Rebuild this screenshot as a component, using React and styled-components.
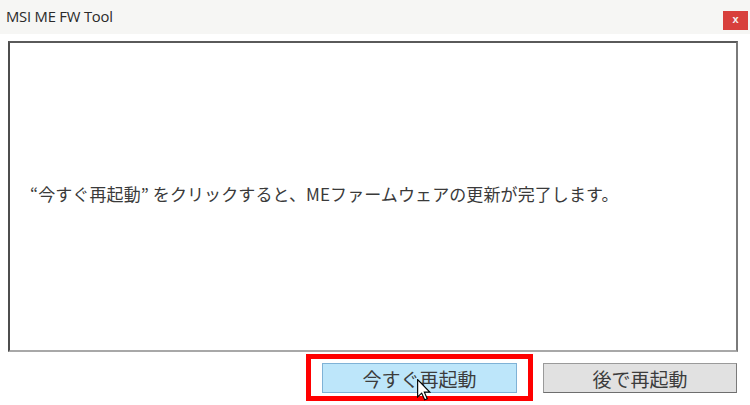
import React from "react";
import styled, { createGlobalStyle } from "styled-components";

const Global = createGlobalStyle`
  html, body { margin: 0; padding: 0; background: #ffffff; }
  body { font-family: "Noto Sans", "Noto Sans CJK JP", sans-serif; }
`;

const Window = styled.div`
  position: relative;
  width: 750px;
  height: 405px;
  background: #ffffff;
  display: flex;
  flex-direction: column;
  overflow: hidden;
`;

const TitleBar = styled.div`
  height: 34px;
  flex: none;
  background: #f6f6f4;
  display: flex;
  align-items: center;
  justify-content: space-between;
  padding: 0 2px 0 6px;
  box-sizing: border-box;
`;

const Title = styled.span`
  font-family: "Open Sans", "Noto Sans", sans-serif;
  font-size: 14.8px;
  color: #2a2a2a;
  letter-spacing: -0.2px;
  margin-top: -3px;
`;

const CloseButton = styled.div`
  width: 25px;
  height: 19px;
  background: #d8403c;
  color: #f4f4f4;
  display: flex;
  align-items: center;
  justify-content: center;
  font-family: "Liberation Sans", sans-serif;
  font-weight: bold;
  font-size: 11px;
  line-height: 1;
  margin-top: 6px;
  padding-bottom: 2px;
  box-sizing: border-box;
`;

const Panel = styled.div`
  margin: 7px 12px 0 8px;
  height: 311px;
  box-sizing: border-box;
  border-style: solid;
  border-width: 2px;
  border-color: #5a5a5a #7a7a7a #a8a8a8 #4e4e4e;
  display: flex;
  align-items: center;
  padding: 0 0 6px 20px;
`;

const Message = styled.p`
  margin: 0;
  font-family: "Noto Sans CJK JP", "Noto Sans", sans-serif;
  font-size: 17px;
  color: #3a3a3a;
  letter-spacing: 0.1px;
`;

const ButtonRow = styled.div`
  display: flex;
  justify-content: flex-end;
  align-items: flex-start;
  gap: 10px;
  padding: 2px 13px 0 0;
`;

const Highlight = styled.div`
  border: 5px solid #ff0000;
  padding: 4px 11px 3px 11px;
  display: flex;
`;

const Button = styled.div`
  width: ${(p) => p.$w}px;
  height: 30px;
  box-sizing: border-box;
  display: flex;
  align-items: center;
  justify-content: center;
  font-family: "Noto Sans CJK JP", sans-serif;
  font-size: 19px;
  color: #3c3c3c;
  background: ${(p) => (p.$primary ? "#bde6fa" : "#e1e1e1")};
  border: 1px solid ${(p) => (p.$primary ? "#7fb2d6" : "#9a9a9a")};
  ${(p) => (p.$primary ? "" : "border-bottom-color: #6e6e6e; border-right-color: #7a7a7a;")}
`;

const ButtonSlot = styled.div`
  padding-top: 9px;
`;

const Cursor = styled.svg`
  position: absolute;
  left: 417px;
  top: 379px;
  width: 14px;
  height: 22px;
  pointer-events: none;
`;

export default function App() {
  return (
    <>
      <Global />
      <Window>
        <TitleBar>
          <Title>MSI ME FW Tool</Title>
          <CloseButton>x</CloseButton>
        </TitleBar>
        <Panel>
          <Message>“今すぐ再起動” をクリックすると、MEファームウェアの更新が完了します。</Message>
        </Panel>
        <ButtonRow>
          <Highlight>
            <Button $primary $w={195}>今すぐ再起動</Button>
          </Highlight>
          <ButtonSlot>
            <Button $w={194}>後で再起動</Button>
          </ButtonSlot>
        </ButtonRow>
        <Cursor viewBox="0 0 12 19">
          <path
            d="M0.5 0.5 L0.5 15.5 L4 12.2 L6.6 18 L8.8 17 L6.3 11.4 L11 11.4 Z"
            fill="#ffffff"
            stroke="#000000"
            strokeWidth="1"
            strokeLinejoin="miter"
          />
        </Cursor>
      </Window>
    </>
  );
}
